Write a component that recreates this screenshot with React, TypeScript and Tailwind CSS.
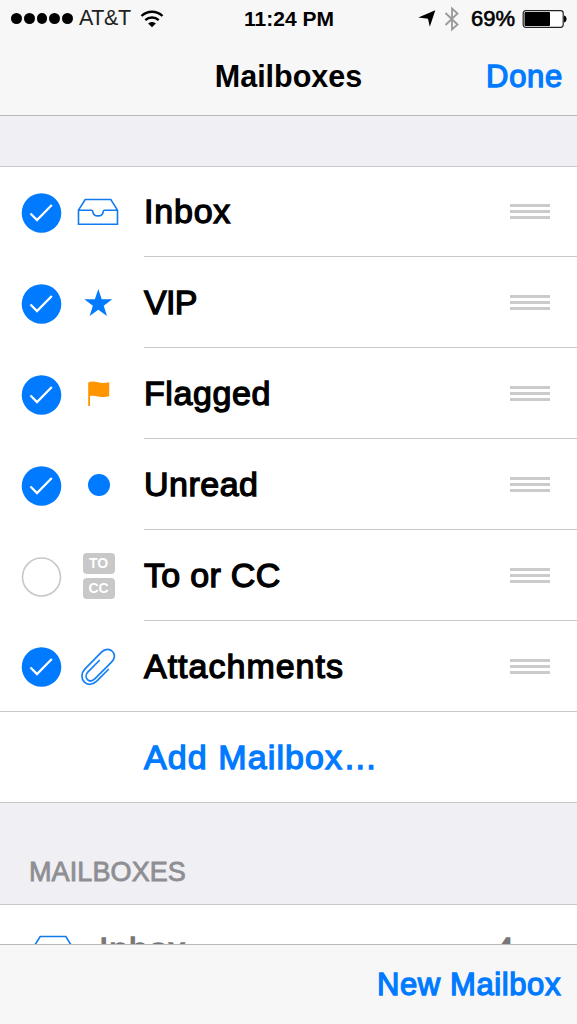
import type { ReactNode } from "react";

interface MailboxRowProps {
  label: string;
  icon: ReactNode;
  tracking?: string;
  checked?: boolean;
  last?: boolean;
}

function InboxIcon() {
  return (
    <svg width="42" height="30" viewBox="0 0 42 30" fill="none" stroke="#117bee" strokeWidth="1.6">
      <path d="M1.5 13.2 8.2 2.5h25.6l6.7 10.7v14H1.5V13.2h13.1c.7 0 1 .4 1.1 1.1.4 3.1 2.1 4.6 5.3 4.6s4.9-1.5 5.3-4.6c.1-.7.4-1.1 1.1-1.1h13.1" />
    </svg>
  );
}

function StarIcon() {
  return (
    <svg width="30" height="30" viewBox="0 0 30 30" fill="#007aff">
      <path d="M15.300 1 18.700 11.300H29.300L20.700 17.800 24 28 15.300 21.800 6.600 28 9.900 17.800 1.300 11.300H11.900Z" />
    </svg>
  );
}

function FlagIcon() {
  return (
    <svg width="24" height="28" viewBox="0 0 24 28" fill="#ff9500">
      <path d="M2.200 2.400C5.500.9 8.500 1.300 12 2.300c3.700 1 7.500.9 11.200 0v14c-3.800 1.200-7.400.9-11.200.1-2.900-.8-5.500-1-8-.4v10H2.200Z" />
    </svg>
  );
}

function PaperclipIcon() {
  return (
    <svg
      width="38"
      height="40"
      viewBox="0 0 38 40"
      fill="none"
      stroke="#1480f5"
      strokeWidth="1.7"
      strokeLinecap="round"
    >
      <path d="M29.300 23.500 18 34.900C14 38.900 8.800 39.500 5.400 36.100S2 27.100 6 22.900L22.500 6.200C26.200 2.600 30.700 2.700 33.500 5.500S36 12.700 32.500 16.200L16.300 32.400C13.600 35.100 10.500 35.600 8.500 33.600S6.400 28.400 9 25.800L20.300 14.500" />
    </svg>
  );
}

function RecipientIcon() {
  return (
    <div className="ml-px flex flex-col gap-1 text-[14px] font-bold text-white">
      <span className="flex h-[21px] w-8 items-center justify-center rounded-[4px] bg-[#c8c8c8]">TO</span>
      <span className="flex h-[21px] w-8 items-center justify-center rounded-[4px] bg-[#c8c8c8]">CC</span>
    </div>
  );
}

function CheckCircle({ checked }: { checked: boolean }) {
  return (
    <svg className="mt-[2px] shrink-0" width="41" height="40" viewBox="0 0 41 40" fill="none">
      {checked ? (
        <>
          <circle cx="20.500" cy="20" r="19.800" fill="#007aff" />
          <path d="M9.500 20.500 16 27 30.800 12" stroke="white" strokeWidth="2.300" />
        </>
      ) : (
        <circle cx="20.500" cy="20" r="19" stroke="#c8c8c8" strokeWidth="1.600" />
      )}
    </svg>
  );
}

function DragHandle() {
  return (
    <div className="mr-[27px] flex flex-col gap-[3px]">
      <span className="h-[3px] w-10 bg-[#cbcbcb]" />
      <span className="h-[3px] w-10 bg-[#cbcbcb]" />
      <span className="h-[3px] w-10 bg-[#cbcbcb]" />
    </div>
  );
}

function MailboxRow({ label, icon, tracking = "tracking-[0.8px]", checked = true, last = false }: MailboxRowProps) {
  return (
    <li className={`flex h-[91px] pl-[21px] ${last ? "border-b border-[#c8c7cc]" : ""}`}>
      <div className="flex w-[123px] items-center">
        <CheckCircle checked={checked} />
        <div className="ml-[5px] flex w-[62px] justify-center">{icon}</div>
      </div>
      <div
        className={`flex flex-1 items-center justify-between ${last ? "" : "border-b border-[#c8c7cc]"}`}
      >
        <span className={`text-[34px] leading-none [-webkit-text-stroke:1.3px_currentColor] ${tracking}`}>
          {label}
        </span>
        <DragHandle />
      </div>
    </li>
  );
}

function StatusBar() {
  return (
    <div className="grid h-[37px] grid-cols-3 items-center pr-[10px] pl-[11px]">
      <div className="flex items-center">
        <div className="flex gap-[2px]">
          {[0, 1, 2, 3, 4].map((dot) => (
            <span key={dot} className="size-[10.800px] rounded-full bg-black" />
          ))}
        </div>
        <span className="ml-[6px] text-[21.500px] leading-none tracking-[-0.4px] text-[#222]">AT&amp;T</span>
        <svg className="ml-[9px]" width="24" height="18" viewBox="0 0 24 18" fill="none" stroke="black">
          <path d="M1.500 6C7.400.3 16.600.3 22.500 6" strokeWidth="2.400" />
          <path d="M5.300 10.200c3.700-3.600 9.700-3.600 13.400 0" strokeWidth="2.400" />
          <path d="M8.200 13.500c2.100-2 5.500-2 7.600 0L12 17.300Z" fill="black" stroke="none" />
        </svg>
      </div>
      <span className="text-center text-[21px] leading-none font-bold">11:24 PM</span>
      <div className="flex items-center justify-end">
        <svg width="18" height="17" viewBox="0 0 18 17">
          <path d="M17.300.3 11.800 16.800 10 8.800.3 7.500Z" />
        </svg>
        <svg
          className="ml-[8px]"
          width="16"
          height="26"
          viewBox="0 0 16 26"
          fill="none"
          stroke="#999"
          strokeWidth="1.800"
        >
          <path d="m1.500 7 12 11.500L8 23.500v-21l5.500 5L1.500 19" />
        </svg>
        <span className="ml-[11px] text-[22px] leading-none [-webkit-text-stroke:0.6px_currentColor]">69%</span>
        <svg className="ml-[7px]" width="45" height="18" viewBox="0 0 45 18">
          <rect x="1.200" y=".7" width="40" height="16.600" rx="2.500" fill="white" stroke="#222" strokeWidth="1.200" />
          <rect x="2.500" y="2" width="25.500" height="14" rx="1" />
          <path d="M42 5.500c3.400.5 3.400 6.500 0 7Z" />
        </svg>
      </div>
    </div>
  );
}

export default function App() {
  return (
    <div className="flex h-[1024px] w-[577px] flex-col overflow-hidden bg-[#efeff4] font-['Liberation_Sans',Arial,sans-serif] text-black">
      <header className="h-[116px] shrink-0 border-b border-[#b9b9bd] bg-[#f7f7f7]">
        <StatusBar />
        <div className="grid h-[78px] grid-cols-3 items-center px-[14px]">
          <h1 className="col-start-2 text-center text-[30.500px] leading-none font-bold">Mailboxes</h1>
          <button
            type="button"
            className="text-right text-[31px] leading-none tracking-[0.7px] text-[#007aff] [-webkit-text-stroke:1.3px_currentColor]"
          >
            Done
          </button>
        </div>
      </header>

      <section className="mt-[50px] shrink-0 bg-white shadow-[inset_0_1px_#c8c7cc]">
        <ul>
          <MailboxRow label="Inbox" icon={<InboxIcon />} />
          <MailboxRow label="VIP" icon={<StarIcon />} tracking="tracking-[-0.7px]" />
          <MailboxRow label="Flagged" icon={<FlagIcon />} tracking="tracking-[0.6px]" />
          <MailboxRow label="Unread" icon={<span className="ml-px size-[22px] rounded-full bg-[#007aff]" />} tracking="tracking-[0.5px]" />
          <MailboxRow label="To or CC" icon={<RecipientIcon />} tracking="tracking-[0.3px]" checked={false} />
          <MailboxRow label="Attachments" icon={<PaperclipIcon />} tracking="tracking-[1px]" last />
        </ul>
        <button
          type="button"
          className="flex h-[91px] w-full items-center border-b border-[#c8c7cc] pl-[144px] text-[34px] leading-none tracking-[1.100px] text-[#007aff] [-webkit-text-stroke:1.3px_currentColor]"
        >
          Add Mailbox…
        </button>
      </section>

      <h2 className="flex h-[102px] shrink-0 items-end border-b border-[#c8c7cc] pb-[18px] pl-[29px] text-[27px] leading-none tracking-[0.1px] text-[#8e8e93] [-webkit-text-stroke:0.8px_currentColor]">
        MAILBOXES
      </h2>

      <div className="h-[39px] shrink-0 overflow-hidden bg-white">
        <div className="flex h-[88px] items-center pr-[63px] pl-[32px] text-[34px] leading-none text-[#777]">
          <InboxIcon />
          <span className="ml-[25px] tracking-[0.8px] [-webkit-text-stroke:1.3px_currentColor]">Inbox</span>
          <span className="ml-auto [-webkit-text-stroke:1.3px_currentColor]">4</span>
        </div>
      </div>

      <footer className="flex h-20 shrink-0 items-center justify-end border-t border-[#b9b9bd] bg-[#f7f7f7] pr-4">
        <button
          type="button"
          className="text-[31px] leading-none tracking-[0.6px] text-[#007aff] [-webkit-text-stroke:1.3px_currentColor]"
        >
          New Mailbox
        </button>
      </footer>
    </div>
  );
}
